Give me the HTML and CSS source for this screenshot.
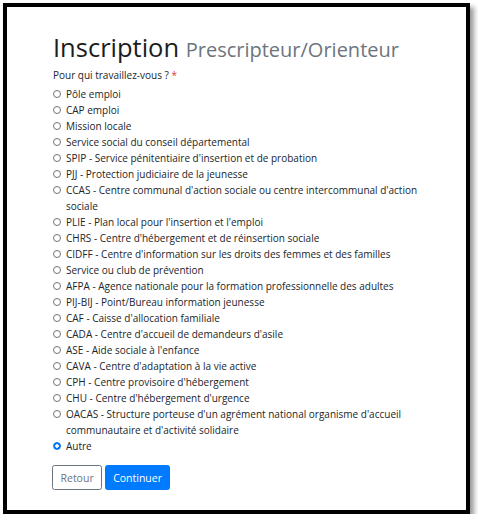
FILE: index.html
```html
<!DOCTYPE html>
<html lang="fr">
<head>
<meta charset="utf-8">
<title>Inscription Prescripteur/Orienteur</title>
<link rel="stylesheet" href="styles.css">
</head>
<body>
<div class="frame">
  <div class="content">
    <h1 class="title">Inscription <small class="muted">Prescripteur/Orienteur</small></h1>
    <form class="form">
      <div class="label">Pour qui travaillez-vous ? <span class="req">*</span></div>
      <div class="options">
        <label class="opt"><span class="radio"></span><span class="txt">Pôle emploi</span></label>
        <label class="opt"><span class="radio"></span><span class="txt">CAP emploi</span></label>
        <label class="opt"><span class="radio"></span><span class="txt">Mission locale</span></label>
        <label class="opt"><span class="radio"></span><span class="txt">Service social du conseil départemental</span></label>
        <label class="opt"><span class="radio"></span><span class="txt">SPIP - Service pénitentiaire d'insertion et de probation</span></label>
        <label class="opt"><span class="radio"></span><span class="txt">PJJ - Protection judiciaire de la jeunesse</span></label>
        <label class="opt"><span class="radio"></span><span class="txt">CCAS - Centre communal d'action sociale ou centre intercommunal d'action sociale</span></label>
        <label class="opt"><span class="radio"></span><span class="txt">PLIE - Plan local pour l'insertion et l'emploi</span></label>
        <label class="opt"><span class="radio"></span><span class="txt">CHRS - Centre d'hébergement et de réinsertion sociale</span></label>
        <label class="opt"><span class="radio"></span><span class="txt">CIDFF - Centre d'information sur les droits des femmes et des familles</span></label>
        <label class="opt"><span class="radio"></span><span class="txt">Service ou club de prévention</span></label>
        <label class="opt"><span class="radio"></span><span class="txt">AFPA - Agence nationale pour la formation professionnelle des adultes</span></label>
        <label class="opt"><span class="radio"></span><span class="txt">PIJ-BIJ - Point/Bureau information jeunesse</span></label>
        <label class="opt"><span class="radio"></span><span class="txt">CAF - Caisse d'allocation familiale</span></label>
        <label class="opt"><span class="radio"></span><span class="txt">CADA - Centre d'accueil de demandeurs d'asile</span></label>
        <label class="opt"><span class="radio"></span><span class="txt">ASE - Aide sociale à l'enfance</span></label>
        <label class="opt"><span class="radio"></span><span class="txt">CAVA - Centre d'adaptation à la vie active</span></label>
        <label class="opt"><span class="radio"></span><span class="txt">CPH - Centre provisoire d'hébergement</span></label>
        <label class="opt"><span class="radio"></span><span class="txt">CHU - Centre d'hébergement d'urgence</span></label>
        <label class="opt"><span class="radio"></span><span class="txt">OACAS - Structure porteuse d'un agrément national organisme d'accueil communautaire et d'activité solidaire</span></label>
        <label class="opt"><span class="radio checked"></span><span class="txt">Autre</span></label>
      </div>
      <div class="actions">
        <button type="button" class="btn btn-outline">Retour</button>
        <button type="button" class="btn btn-primary">Continuer</button>
      </div>
    </form>
  </div>
</div>
</body>
</html>
```
FILE: styles.css
```css
* { box-sizing: border-box; }
html, body { margin: 0; padding: 0; background: #fff; }
body {
  font-family: "Open Sans", "Noto Sans", sans-serif;
  color: #212529;
}
.frame {
  margin: 3px 0 0 3px;
  width: 467px;
  height: 511px;
  border: 4px solid #000;
  background: #fff;
  box-shadow: 4px 4px 5px rgba(0,0,0,0.4);
}
.content {
  padding: 23px 0 0 46px;
  width: 420px;
}
.title {
  margin: 0;
  font-weight: 500;
  font-size: 25.5px;
  line-height: 34px;
  color: #1a1d20;
}
.muted {
  font-size: 20px;
  font-weight: 400;
  color: #6c757d;
}
.label {
  font-size: 10px;
  line-height: 16px;
  margin-bottom: 3px;
}
.req { color: #dc3545; }
.options { display: flex; flex-direction: column; }
.opt {
  display: flex;
  align-items: flex-start;
  font-size: 10px;
  line-height: 16px;
}
.radio {
  flex: none;
  width: 8px;
  height: 8px;
  border: 1px solid #767676;
  border-radius: 50%;
  margin: 4px 5px 0 0;
  background: #fff;
}
.radio.checked {
  border-color: #0075ff;
  background: radial-gradient(circle, #fff 0 1.5px, #0075ff 2px);
}
.actions {
  display: flex;
  gap: 3px;
  margin-top: 11px;
  margin-left: -1px;
}
.btn {
  font-family: inherit;
  font-size: 10.5px;
  height: 25px;
  padding: 0 7.5px;
  border-radius: 2.5px;
  border: 1px solid;
  background: #fff;
}
.btn-outline { border-color: #6c757d; color: #6c757d; }
.btn-primary { background: #007bff; border-color: #007bff; color: #fff; padding: 0 7px; }
```
